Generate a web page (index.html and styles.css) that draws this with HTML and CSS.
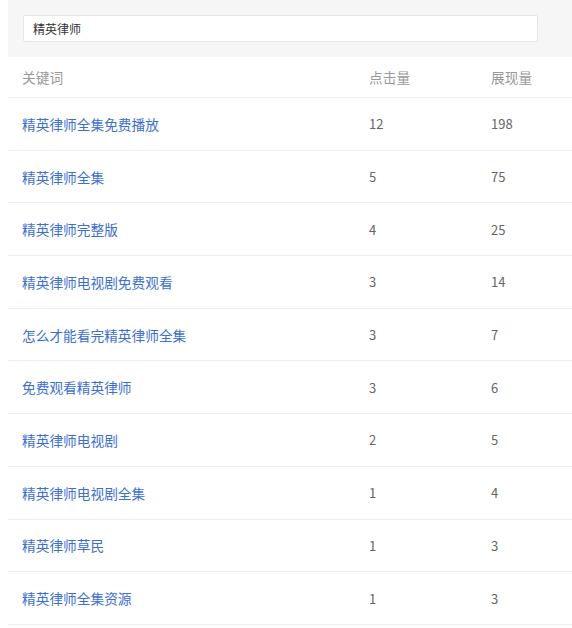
FILE: index.html
```html
<!DOCTYPE html>
<html>
<head>
<meta charset="utf-8">
<link rel="stylesheet" href="styles.css">
</head>
<body>
<div class="wrap">
  <div class="search">
    <div class="input">精英律师</div>
  </div>
  <div class="table">
    <div class="row head"><span class="c1">关键词</span><span class="c2">点击量</span><span class="c3">展现量</span></div>
    <div class="row"><a class="c1">精英律师全集免费播放</a><span class="c2">12</span><span class="c3">198</span></div>
    <div class="row"><a class="c1">精英律师全集</a><span class="c2">5</span><span class="c3">75</span></div>
    <div class="row"><a class="c1">精英律师完整版</a><span class="c2">4</span><span class="c3">25</span></div>
    <div class="row"><a class="c1">精英律师电视剧免费观看</a><span class="c2">3</span><span class="c3">14</span></div>
    <div class="row"><a class="c1">怎么才能看完精英律师全集</a><span class="c2">3</span><span class="c3">7</span></div>
    <div class="row"><a class="c1">免费观看精英律师</a><span class="c2">3</span><span class="c3">6</span></div>
    <div class="row"><a class="c1">精英律师电视剧</a><span class="c2">2</span><span class="c3">5</span></div>
    <div class="row"><a class="c1">精英律师电视剧全集</a><span class="c2">1</span><span class="c3">4</span></div>
    <div class="row"><a class="c1">精英律师草民</a><span class="c2">1</span><span class="c3">3</span></div>
    <div class="row"><a class="c1">精英律师全集资源</a><span class="c2">1</span><span class="c3">3</span></div>
  </div>
</div>
</body>
</html>
```
FILE: styles.css
```css
html, body { margin: 0; padding: 0; background: #fff; }
body { font-family: "Noto Sans CJK SC", "Noto Sans", sans-serif; font-size: 13.7px; color: #666; }
.wrap { margin-left: 8px; }
.search { background: #f6f6f6; padding: 15px 0 15px 15px; height: 27px; }
.input {
  width: 504px; height: 25px; line-height: 25px; background: #fff;
  border: 1px solid #e6e6e6; border-radius: 2px; padding-left: 9px;
  font-size: 12px; color: #333;
}
.row { display: flex; align-items: center; height: 51.7px; border-bottom: 1px solid #eeeeee; padding-left: 14px; }
.row.head { height: 40px; color: #999; }
.c1 { width: 347px; color: #3b6fd6; }
.head .c1 { color: #999; }
.c2 { width: 122px; font-size: 13px; }
.c3 { flex: 1; font-size: 13px; }
.head .c2, .head .c3 { font-size: 13.7px; }
```
